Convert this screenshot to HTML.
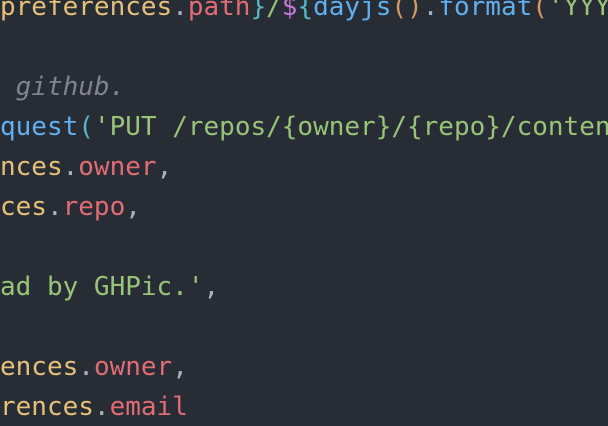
<!DOCTYPE html>
<html><head><style>
html,body{margin:0;padding:0;background:#282c34;width:608px;height:426px;overflow:hidden}
pre{margin:0;position:absolute;left:0;top:-13px;width:608px;height:439px;overflow:hidden;font-family:"DejaVu Sans Mono","Liberation Mono",monospace;font-size:26px;line-height:40px;color:#abb2bf;white-space:pre}
.y{color:#e5c07b}.r{color:#e06c75}.c{color:#56b6c2}.p{color:#c678dd}.b{color:#61afef}.g{color:#98c379}.o{color:#d19a66}.cm{color:#7f848e;font-style:italic}
</style></head><body>
<pre><span class="y">preferences</span>.<span class="r">path</span><span class="c">}</span><span class="g">/</span><span class="p">$</span><span class="c">{</span><span class="b">dayjs</span><span class="o">()</span>.<span class="b">format</span><span class="o">(</span><span class="g">'YYY</span>

<span class="cm"> github.</span>
<span class="b">quest</span><span class="c">(</span><span class="g">'PUT /repos/{owner}/{repo}/conten</span>
<span class="y">nces</span>.<span class="r">owner</span>,
<span class="y">ces</span>.<span class="r">repo</span>,

<span class="g">ad by GHPic.'</span>,

<span class="y">ences</span>.<span class="r">owner</span>,
<span class="y">rences</span>.<span class="r">email</span>
</pre>
</body></html>
